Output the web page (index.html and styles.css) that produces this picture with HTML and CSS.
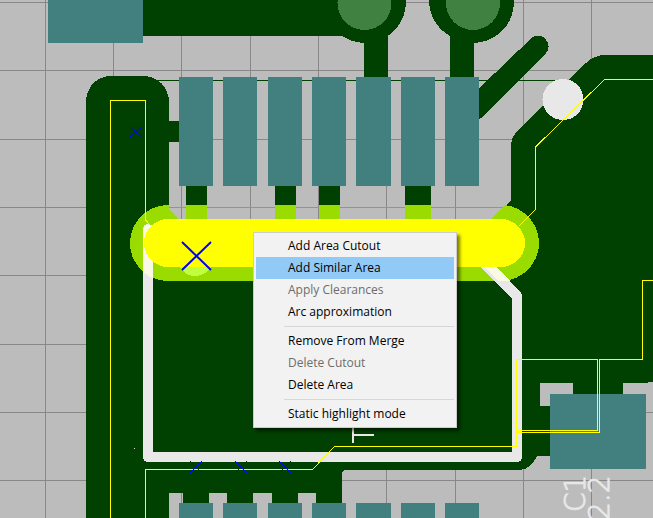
FILE: index.html
```html
<!DOCTYPE html>
<html lang="en">
<head>
<meta charset="utf-8">
<title>Board editor</title>
<link rel="stylesheet" href="styles.css">
</head>
<body>
<main class="editor">
  <svg class="board" viewBox="0 0 653 518" preserveAspectRatio="xMinYMin slice" aria-hidden="true">
    <defs>
      <g id="copper">
        <path d="M143 0H365V36H143z"/>
        <circle cx="365" cy="2" r="41"/>
        <circle cx="473" cy="2" r="41"/>
        <path d="M450 0V36A41 41 0 0 1 429 0z"/>
        <path d="M364 30H388V77H364zM450 30H474V77H450z"/>
        <path d="M158 80H575V81H158z"/>
        <path d="M169 121H179V142H169z"/>
        <path d="M471 96L530.500 39A10.500 10.500 0 0 1 545.500 54L479 120L471 128z"/>
        <path d="M186 186H207V220H186zM275 186H296V220H275zM319 186H340V220H319zM405 186H431V220H405z"/>
        <path fill-rule="evenodd" d="M86 518V103C86 86 97 76 112 76H143C158 76 169 87 169 103V210L178 219H492L511 200V146C511 139 514 134 519 129L586 63Q594 55 606 55H653V382H648V383H623V400H573V383H540V406H560V456H537Q531 469 520 470H344L342 472V518H316V493H298V518H272V493H253V518H227V493H209V518H183V493H169V518z"/>
      </g>
      <clipPath id="onCopper">
        <path d="M86 518V103H169V209L179 219H491L511 199V146H653V380H86z"/>
        <path d="M186 186H207V220H186zM275 186H296V220H275zM319 186H340V220H319zM405 186H431V220H405z"/>
      </clipPath>
    </defs>

    <rect class="ground" width="653" height="518"/>
    <path class="grid" d="M45.500 0V518M113.500 0V518M181.500 0V518M250.500 0V518M318.500 0V518M386.500 0V518M455.500 0V518M523.500 0V518M591.500 0V518M0 2.500H653M0 70.500H653M0 139.500H653M0 207.500H653M0 275.500H653M0 344.500H653M0 412.500H653M0 480.500H653"/>
    <path class="grid-tint" d="M169 207.500H505"/>
    <use class="copper" href="#copper"/>
    <circle class="via" cx="364.500" cy="3" r="27"/>
    <circle class="via" cx="473" cy="3" r="27"/>

    <g class="pad">
      <path d="M48 0H143V43H48z"/>
      <path d="M179 77H213V186H179zM223 77H257V186H223zM268 77H302V186H268zM312 77H346V186H312zM356 77H391V186H356zM401 77H435V186H401zM445 77H479V186H445z"/>
      <path d="M179 503H213V518H179zM223 503H257V518H223zM268 503H302V518H268zM312 503H346V518H312zM356 503H391V518H356zM401 503H435V518H401zM445 503H479V518H445z"/>
      <path d="M550 394H646V469H550z"/>
    </g>

    <rect class="halo" x="130" y="205" width="409" height="76" rx="38" clip-path="url(#onCopper)"/>
    <path class="silk-line" d="M148 229V457H517V296L484 263"/>
    <path class="silk-halo" d="M143 267V272L153 279V258L146 250L146 234L153 226Q144 222 143 231zM484 267L498 281H510L497 267z"/>
    <path class="hot-pad" d="M180 267H211Q205 276 195 276Q186 276 180 267z"/>
    <rect class="area" x="144" y="219" width="381" height="48" rx="24"/>
    <circle class="silk-dot" cx="563" cy="99.500" r="20.500"/>
    <path class="silk-mark" d="M353 424V443M353 435H374"/>
    <rect class="silk-dot" x="134" y="448" width="1" height="1"/>

    <g class="outline">
      <path d="M110.500 518V100.500H145.500V220L151 226"/>
      <path d="M653 79.500H604.500L535.500 147V209.500L519 226"/>
      <path d="M653 280.500H642.500V359.500H599.500V432.500H516.500"/>
      <path d="M145.500 518V469.500H312.500L334.500 446.500H516.500V359.500H597.500V430.500H516.500"/>
    </g>

    <path class="cursor" d="M182 242L211 270M211 242L182 270"/>
    <path class="origin" d="M130 127L142 137M142 127L130 137M190 461L202 473M202 461L190 473M235 461L247 473M247 461L235 473M279 461L291 473M291 461L279 473"/>
    <text class="silk-text" transform="translate(585 512) rotate(-90)">C1</text>
    <text class="silk-text" transform="translate(609 520) rotate(-90)">2.2</text>
  </svg>

  <div class="menu" role="menu">
    <button class="item" role="menuitem" type="button">Add Area Cutout</button>
    <button class="item item-active" role="menuitem" type="button">Add Similar Area</button>
    <button class="item" role="menuitem" type="button" disabled>Apply Clearances</button>
    <button class="item" role="menuitem" type="button">Arc approximation</button>
    <div class="separator" role="separator"></div>
    <button class="item" role="menuitem" type="button">Remove From Merge</button>
    <button class="item" role="menuitem" type="button" disabled>Delete Cutout</button>
    <button class="item" role="menuitem" type="button">Delete Area</button>
    <div class="separator" role="separator"></div>
    <button class="item" role="menuitem" type="button">Static highlight mode</button>
  </div>
</main>
</body>
</html>
```

FILE: styles.css
```css
* {
  box-sizing: border-box;
}

body {
  margin: 0;
  background: #bcbcbc;
  font-family: "Open Sans", "Noto Sans", sans-serif;
}

.editor {
  position: relative;
  height: 100vh;
  overflow: hidden;
}

.board {
  display: block;
  width: 100%;
  height: 100%;
  shape-rendering: crispEdges;
}

.ground { fill: #bcbcbc; }
.grid { fill: none; stroke: #888888; }
.grid-tint { fill: none; stroke: #96967e; }
.copper { fill: #004000; }
.via { fill: #408040; }
.pad { fill: #428080; }
.halo { fill: #9adb00; }
.hot-pad { fill: #c0ff40; }
.area { fill: #ffff00; }

.silk-line {
  fill: none;
  stroke: #e8e8e8;
  stroke-width: 10;
  stroke-linecap: round;
  stroke-linejoin: round;
}

.silk-halo { fill: #f9f9e4; }
.silk-dot { fill: #e8e8e8; }
.silk-mark { fill: none; stroke: #e8e8e8; stroke-width: 2; }

.silk-text {
  fill: #e8e8e8;
  stroke: #e8e8e8;
  stroke-width: 1;
  font-family: "DejaVu Sans", sans-serif;
  font-size: 28px;
  font-weight: 200;
}

.outline { fill: none; stroke: #ffff00; }

.cursor,
.origin {
  fill: none;
  stroke: #0000ff;
  shape-rendering: geometricPrecision;
}

.cursor { stroke-width: 2; }

.menu {
  position: absolute;
  left: 253px;
  top: 232px;
  width: 204px;
  padding: 2px;
  border: 1px solid #cccccc;
  background: #f2f2f2;
  box-shadow: 3px 3px 3px rgba(0, 0, 0, 0.5);
}

.item {
  display: block;
  width: 100%;
  height: 22px;
  padding: 0 0 0 32px;
  border: 0;
  background: transparent;
  color: #000000;
  font: inherit;
  font-size: 12px;
  line-height: 22px;
  text-align: left;
  white-space: nowrap;
}

.item:disabled { color: #6d6d6d; }
.item-active { background: #91c9f7; }

.separator {
  height: 1px;
  margin: 3px 0 3px 28px;
  background: #d7d7d7;
}
```
